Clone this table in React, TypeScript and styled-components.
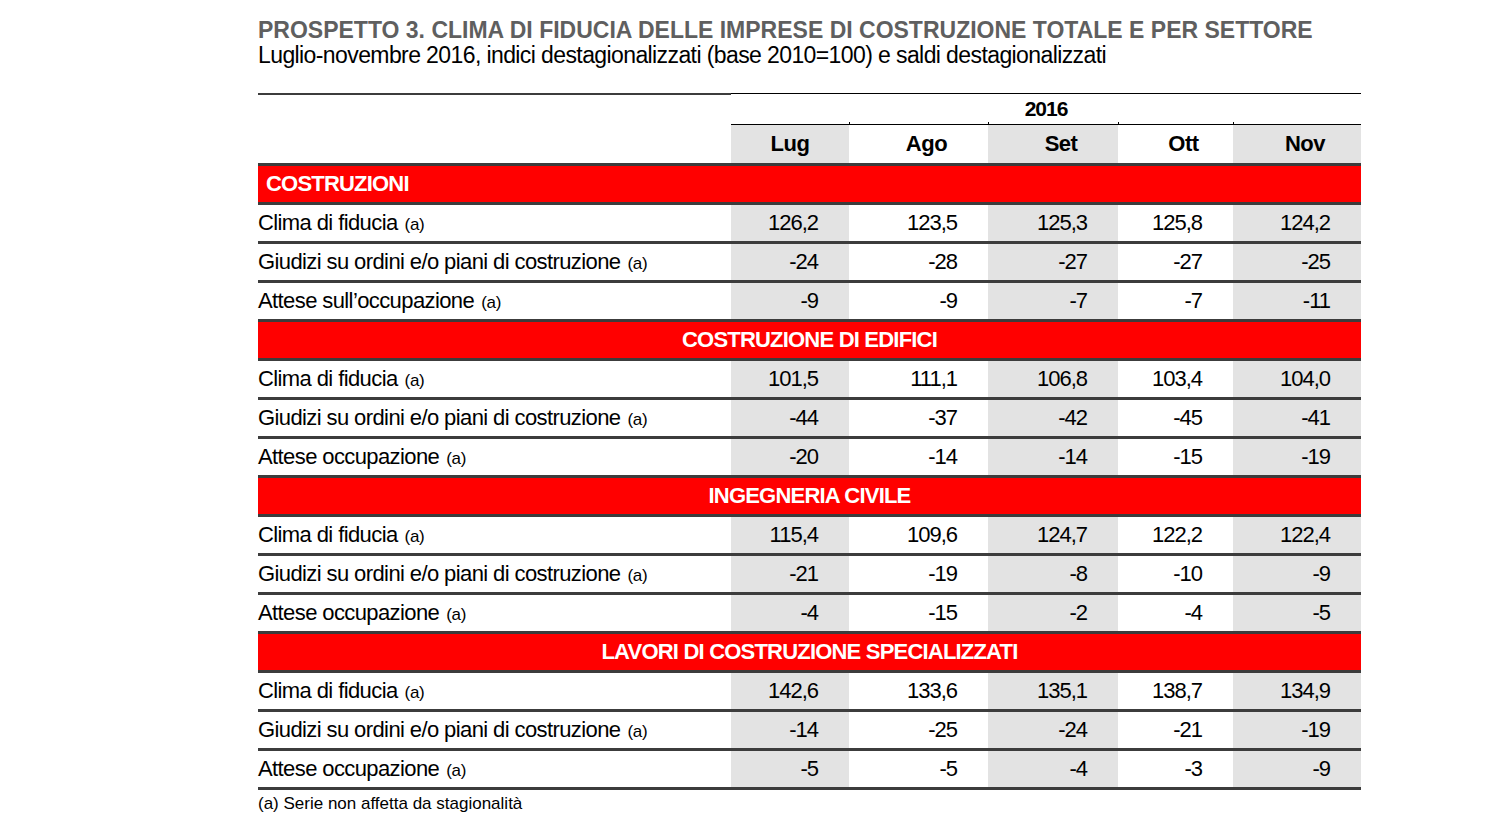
import styled, { createGlobalStyle } from 'styled-components';

const GlobalStyle = createGlobalStyle`
  body {
    margin: 0;
    background: #ffffff;
    font-family: "Liberation Sans", Arial, sans-serif;
    color: #000000;
  }
`;

const COLUMNS = '473px 118px 139px 130px 115px 128px';
const LINE = '#3c3c3c';
const SHADE = '#e3e3e3';
const RED = '#ff0000';

const months = ['Lug', 'Ago', 'Set', 'Ott', 'Nov'];

interface ISection {
  title: string;
  left?: boolean;
  rows: { label: string; values: string[] }[];
}

const sections: ISection[] = [
  {
    title: 'COSTRUZIONI',
    left: true,
    rows: [
      { label: 'Clima di fiducia', values: ['126,2', '123,5', '125,3', '125,8', '124,2'] },
      { label: 'Giudizi su ordini e/o piani di costruzione', values: ['-24', '-28', '-27', '-27', '-25'] },
      { label: 'Attese sull’occupazione', values: ['-9', '-9', '-7', '-7', '-11'] },
    ],
  },
  {
    title: 'COSTRUZIONE DI EDIFICI',
    rows: [
      { label: 'Clima di fiducia', values: ['101,5', '111,1', '106,8', '103,4', '104,0'] },
      { label: 'Giudizi su ordini e/o piani di costruzione', values: ['-44', '-37', '-42', '-45', '-41'] },
      { label: 'Attese occupazione', values: ['-20', '-14', '-14', '-15', '-19'] },
    ],
  },
  {
    title: 'INGEGNERIA CIVILE',
    rows: [
      { label: 'Clima di fiducia', values: ['115,4', '109,6', '124,7', '122,2', '122,4'] },
      { label: 'Giudizi su ordini e/o piani di costruzione', values: ['-21', '-19', '-8', '-10', '-9'] },
      { label: 'Attese occupazione', values: ['-4', '-15', '-2', '-4', '-5'] },
    ],
  },
  {
    title: 'LAVORI DI COSTRUZIONE SPECIALIZZATI',
    rows: [
      { label: 'Clima di fiducia', values: ['142,6', '133,6', '135,1', '138,7', '134,9'] },
      { label: 'Giudizi su ordini e/o piani di costruzione', values: ['-14', '-25', '-24', '-21', '-19'] },
      { label: 'Attese occupazione', values: ['-5', '-5', '-4', '-3', '-9'] },
    ],
  },
];

export default function App() {
  return (
    <>
      <GlobalStyle />
      <Page>
        <Title>PROSPETTO 3. CLIMA DI FIDUCIA DELLE IMPRESE DI COSTRUZIONE TOTALE E PER SETTORE</Title>
        <Subtitle>Luglio-novembre 2016, indici destagionalizzati (base 2010=100) e saldi destagionalizzati</Subtitle>

        <Table>
          <YearRow>
            <YearLabel />
            <YearCell>2016</YearCell>
          </YearRow>
          <MonthRow>
            <div />
            {months.map((m, i) => (
              <MonthCell key={m} shaded={i % 2 === 0} tick={i > 0}>
                {m}
              </MonthCell>
            ))}
          </MonthRow>

          {sections.map((section) => (
            <div key={section.title}>
              <SectionRow left={section.left}>{section.title}</SectionRow>
              {section.rows.map((row) => (
                <DataRow key={row.label}>
                  <Label>
                    {row.label}
                    <Note>(a)</Note>
                  </Label>
                  {row.values.map((v, i) => (
                    <Value key={i} shaded={i % 2 === 0}>
                      {v}
                    </Value>
                  ))}
                </DataRow>
              ))}
            </div>
          ))}
        </Table>
        <Footnote>(a) Serie non affetta da stagionalità</Footnote>
      </Page>
    </>
  );
}

const Page = styled.div`
  padding: 18px 0 0 258px;
  width: 1103px;
`;

const Title = styled.div`
  font-size: 23px;
  line-height: 25px;
  font-weight: 700;
  color: #5f5f5f;
  white-space: nowrap;
`;

const Subtitle = styled.div`
  font-size: 23px;
  line-height: 25px;
  letter-spacing: -0.6px;
  white-space: nowrap;
`;

const Table = styled.div`
  margin-top: 25px;
  display: flex;
  flex-direction: column;
`;

const Row = styled.div`
  display: grid;
  grid-template-columns: ${COLUMNS};
`;

const YearRow = styled(Row)`
  height: 32px;
`;

const YearLabel = styled.div`
  border-top: 2px solid ${LINE};
`;

const YearCell = styled.div`
  grid-column: 2 / -1;
  border-top: 1px solid #000;
  border-bottom: 1px solid #000;
  font-weight: 700;
  font-size: 21px;
  letter-spacing: -1px;
  display: flex;
  align-items: center;
  justify-content: center;
`;

const MonthRow = styled(Row)`
  height: 38px;
  border-bottom: 3px solid ${LINE};
  box-sizing: content-box;
`;

interface IShaded {
  shaded: boolean;
}

const MonthCell = styled.div<IShaded & { tick: boolean }>`
  position: relative;
  background: ${(p) => (p.shaded ? SHADE : 'transparent')};
  font-weight: 700;
  font-size: 22px;
  letter-spacing: -0.5px;
  display: flex;
  align-items: center;
  justify-content: center;
  padding-left: ${(p) => (p.tick ? '16px' : '0')};
  &::before {
    content: '';
    display: ${(p) => (p.tick ? 'block' : 'none')};
    position: absolute;
    left: 0;
    top: -3px;
    width: 1px;
    height: 3px;
    background: #000;
  }
`;

const SectionRow = styled.div<{ left?: boolean }>`
  height: 36px;
  background: ${RED};
  border-bottom: 3px solid ${LINE};
  color: #ffffff;
  font-weight: 700;
  font-size: 22px;
  letter-spacing: -0.8px;
  display: flex;
  align-items: center;
  justify-content: ${(p) => (p.left ? 'flex-start' : 'center')};
  padding-left: ${(p) => (p.left ? '8px' : '0')};
`;

const DataRow = styled(Row)`
  height: 36px;
  border-bottom: 3px solid ${LINE};
  box-sizing: content-box;
`;

const Label = styled.div`
  font-size: 22px;
  letter-spacing: -0.6px;
  display: flex;
  align-items: center;
  white-space: nowrap;
`;

const Note = styled.span`
  font-size: 17px;
  letter-spacing: -0.3px;
  margin-left: 7px;
  padding-top: 4px;
`;

const Value = styled.div<IShaded>`
  background: ${(p) => (p.shaded ? SHADE : 'transparent')};
  font-size: 22px;
  letter-spacing: -1px;
  display: flex;
  align-items: center;
  justify-content: flex-end;
  padding-right: 31px;
`;

const Footnote = styled.div`
  font-size: 17px;
  line-height: 21px;
  margin-top: 3px;
`;
